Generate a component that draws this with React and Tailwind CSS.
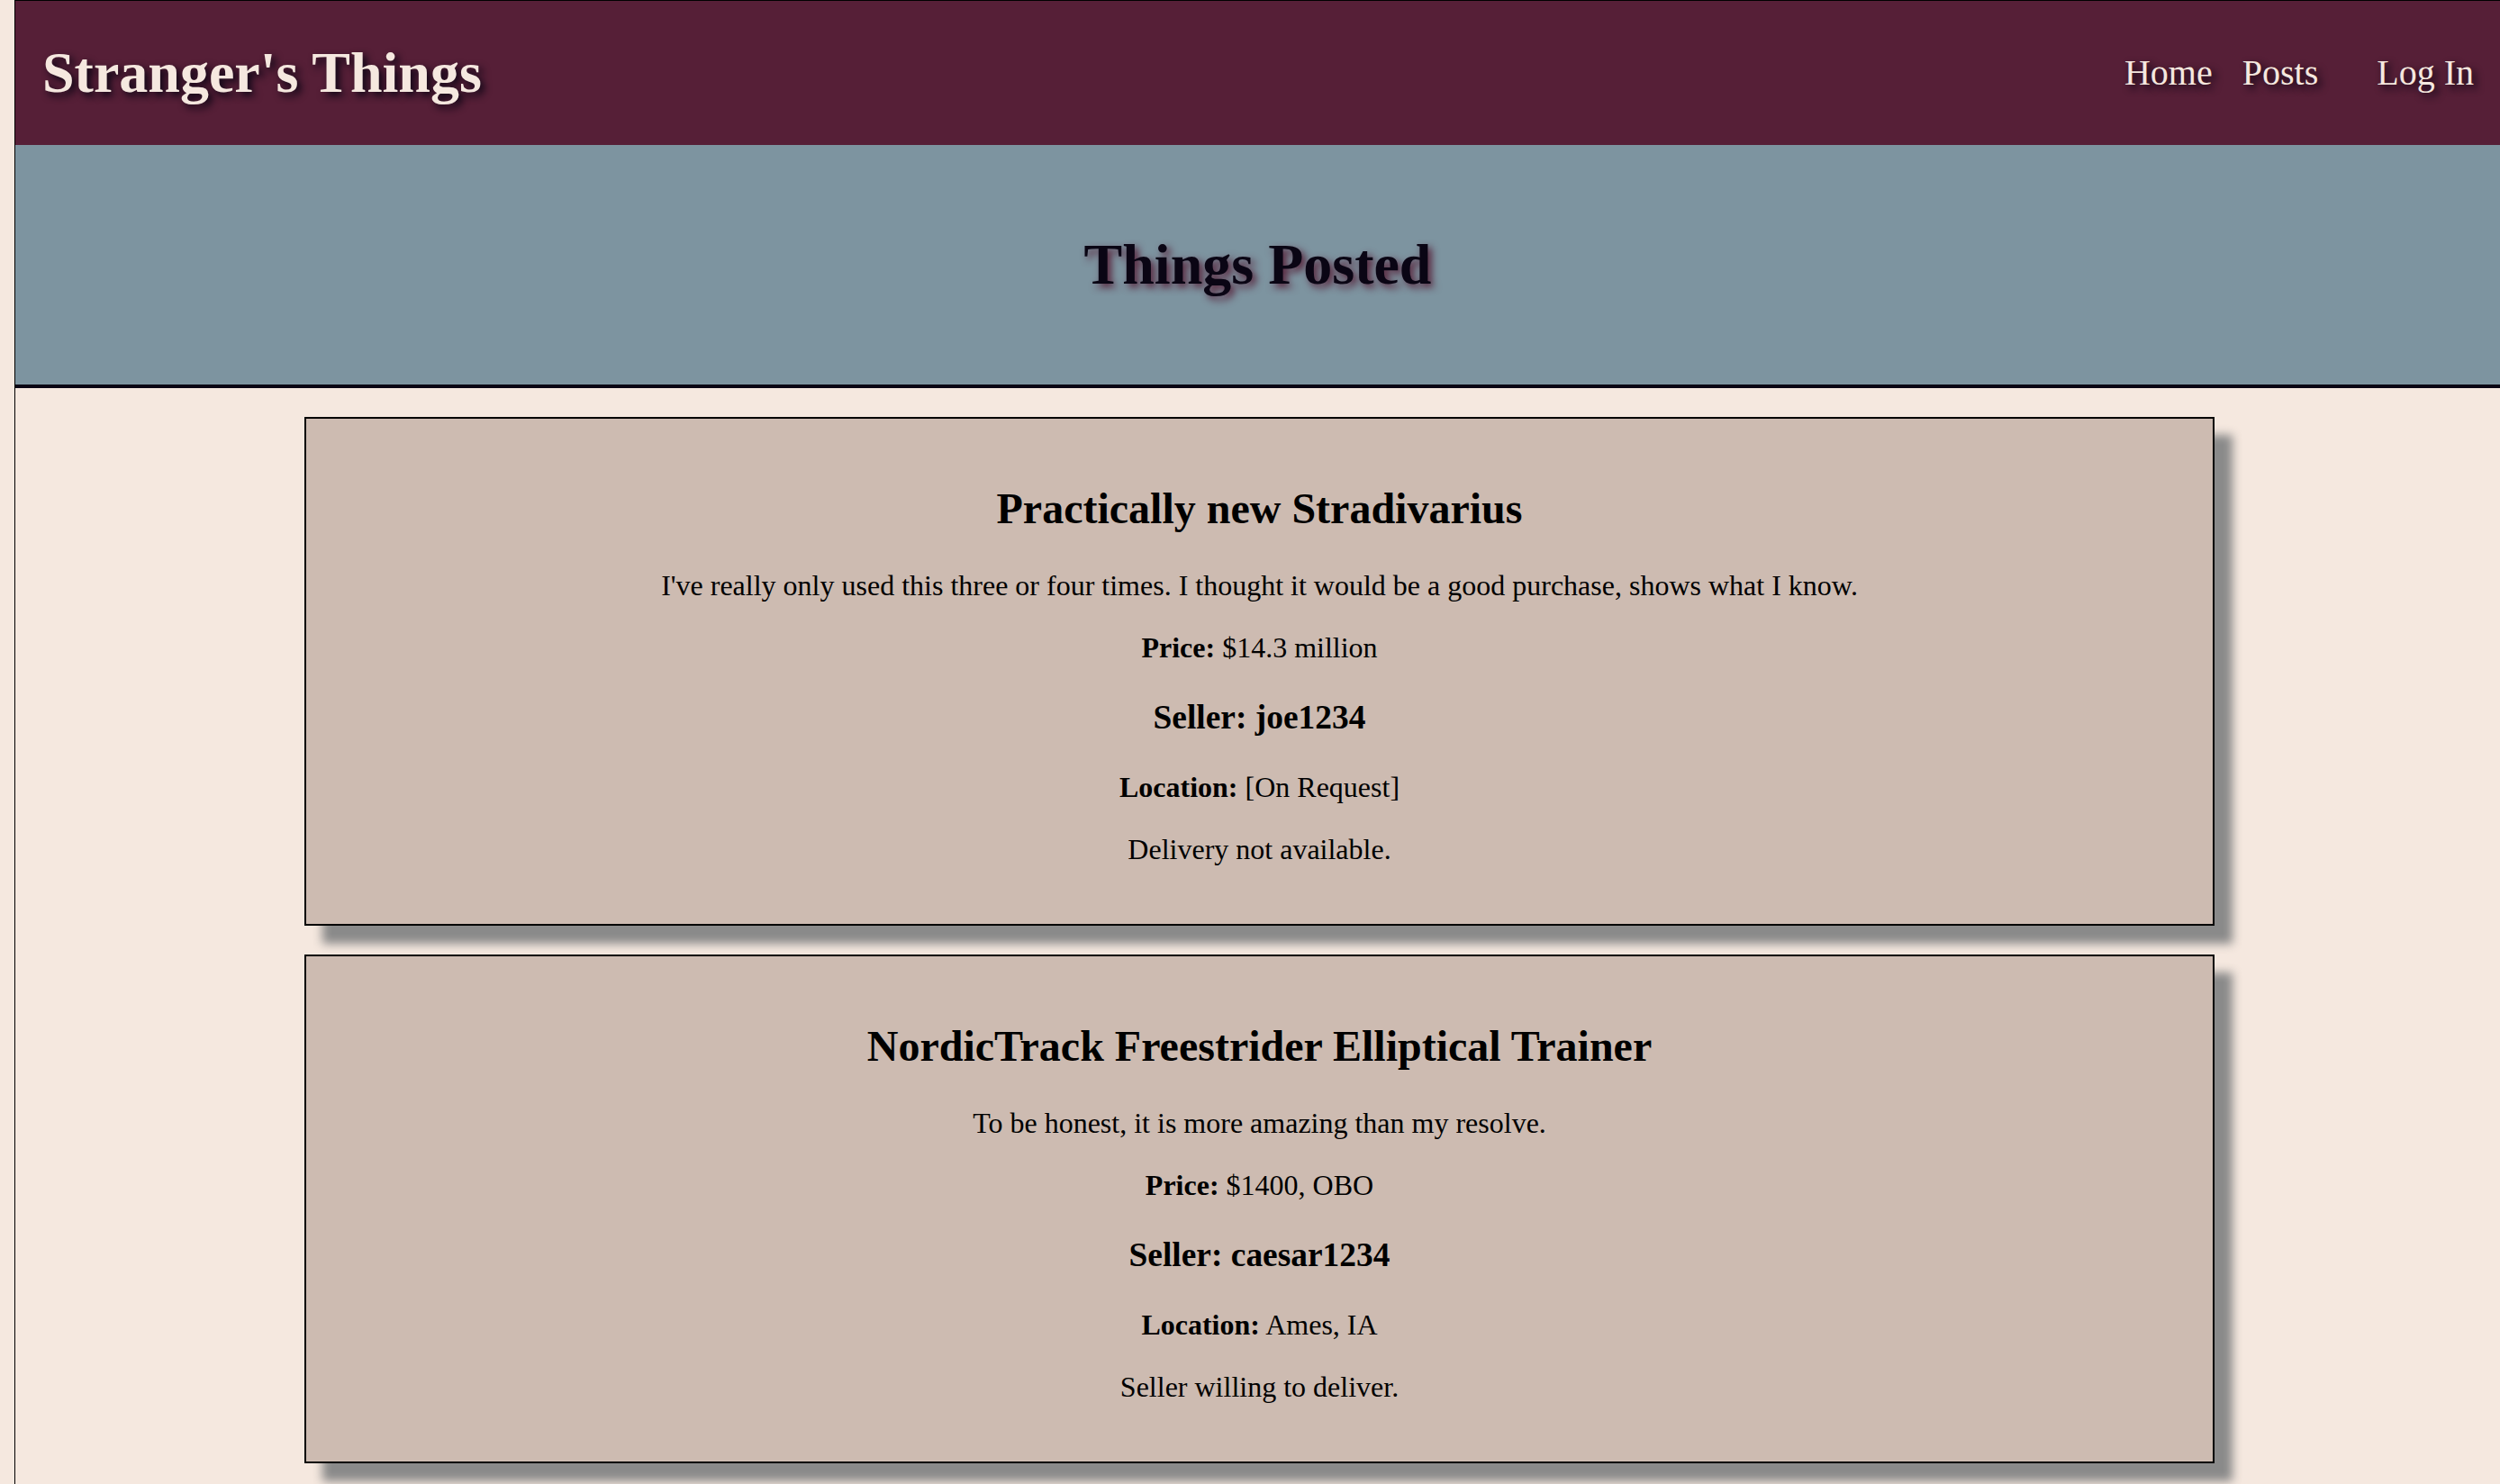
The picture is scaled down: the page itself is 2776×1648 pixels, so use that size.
const posts = [
  {
    title: "Practically new Stradivarius",
    description:
      "I've really only used this three or four times. I thought it would be a good purchase, shows what I know.",
    price: "$14.3 million",
    seller: "joe1234",
    location: "[On Request]",
    willDeliver: false,
  },
  {
    title: "NordicTrack Freestrider Elliptical Trainer",
    description: "To be honest, it is more amazing than my resolve.",
    price: "$1400, OBO",
    seller: "caesar1234",
    location: "Ames, IA",
    willDeliver: true,
  },
];

function Header() {
  return (
    <header className="h-[160px] flex items-center justify-between bg-[#561f37] pl-[30px] pr-[29px]">
      <h1 className="text-[64px] leading-[74px] font-bold text-[#f5e8df] [text-shadow:4px_4px_8px_#0a0514]">
        Stranger's Things
      </h1>
      <nav className="flex items-center text-[40px] leading-[46px] text-[#f5e8df] [text-shadow:4px_4px_8px_#0a0514]">
        <a className="mr-[33px]">Home</a>
        <a className="mr-[65px]">Posts</a>
        <a>Log In</a>
      </nav>
    </header>
  );
}

function PostCard({ post }) {
  return (
    <div className="ml-[321px] w-[2121px] border-2 border-black bg-[#cdbbb1] p-[32px] text-center text-black shadow-[20px_20px_10px_#8a8a8a]">
      <h2 className="text-[48px] leading-[55px] font-bold my-[40px]">{post.title}</h2>
      <p className="text-[32px] leading-[37px] my-[32px]">{post.description}</p>
      <p className="text-[32px] leading-[37px] my-[32px]">
        <b>Price:</b> {post.price}
      </p>
      <h3 className="text-[37.44px] leading-[43px] font-bold my-[37.44px]">
        Seller: {post.seller}
      </h3>
      <p className="text-[32px] leading-[37px] my-[32px]">
        <b>Location:</b> {post.location}
      </p>
      <p className="text-[32px] leading-[37px] my-[32px]">
        {post.willDeliver ? "Seller willing to deliver." : "Delivery not available."}
      </p>
    </div>
  );
}

export default function App() {
  return (
    <div className="min-h-screen bg-[#f5e8df] pl-[16px] font-['Liberation_Serif','Times_New_Roman',serif]">
      <div className="min-h-screen border-l border-t border-black">
        <Header />

        {/* Hero */}
        <section className="h-[270px] flex items-center justify-center bg-[#7d94a0] border-b-4 border-[#0a0514]">
          <h1 className="text-[64px] leading-[74px] font-bold text-[#0a0514] [text-shadow:4px_4px_8px_#561f37]">
            Things Posted
          </h1>
        </section>

        {/* Posts */}
        <div className="flex flex-col gap-[32px] pt-[32px]">
          {posts.map((post) => (
            <PostCard key={post.title} post={post} />
          ))}
        </div>
      </div>
    </div>
  );
}
